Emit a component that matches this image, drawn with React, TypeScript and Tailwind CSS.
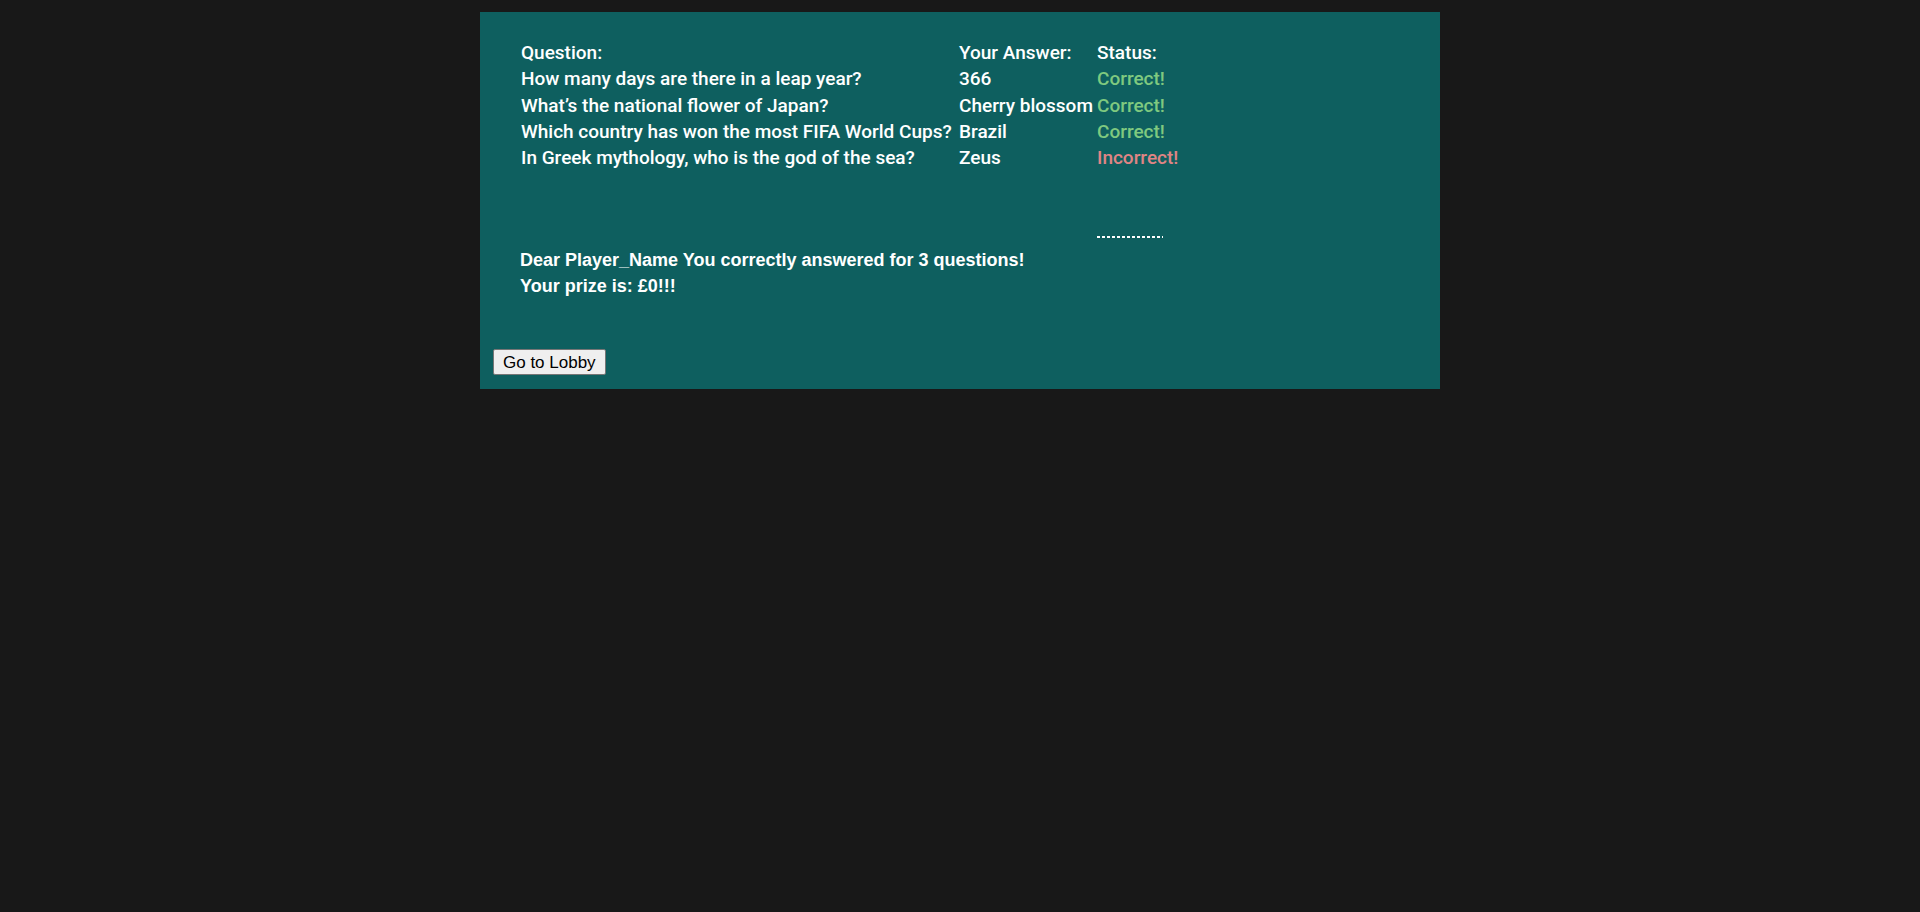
const rows = [
  { q: 'How many days are there in a leap year?', a: '366', ok: true },
  { q: 'What’s the national flower of Japan?', a: 'Cherry blossom', ok: true },
  { q: 'Which country has won the most FIFA World Cups?', a: 'Brazil', ok: true },
  { q: 'In Greek mythology, who is the god of the sea?', a: 'Zeus', ok: false },
];

export default function App() {
  return (
    <div className="min-h-[912px] bg-[#181818] pt-[12px]">
      <div className="mx-auto w-[960px] h-[377px] bg-[#0e5f5f] text-white flex flex-col">
        <div className="pl-[41px] pt-[28px] font-['Roboto',sans-serif] font-medium text-[19px] leading-[26.3px]">
          <div className="grid grid-cols-[438px_138px_1fr]">
            <div>Question:</div>
            <div>Your Answer:</div>
            <div>Status:</div>
            {rows.map(r => (
              <>
                <div key={r.q}>{r.q}</div>
                <div>{r.a}</div>
                <div className={r.ok ? 'text-[#7fc97f]' : 'text-[#e08585]'}>{r.ok ? 'Correct!' : 'Incorrect!'}</div>
              </>
            ))}
          </div>
        </div>
        <div className="ml-[617px] mt-[65px] h-[2px] w-[66px] bg-[repeating-linear-gradient(90deg,#ffffff_0px,#ffffff_3px,transparent_3px,transparent_5px)]" />
        <div className="pl-[40px] mt-[9px] font-['Liberation_Sans',sans-serif] font-bold text-[18px] leading-[26px]">
          <p>Dear Player_Name You correctly answered for 3 questions!</p>
          <p>Your prize is: £0!!!</p>
        </div>
        <div className="pl-[13px] mt-[50px]">
          <button className="h-[26px] px-[9px] bg-[#efefef] border border-[#767676] rounded-[2px] text-black text-[17px] leading-none font-['Liberation_Sans',sans-serif]">
            Go to Lobby
          </button>
        </div>
      </div>
    </div>
  );
}
